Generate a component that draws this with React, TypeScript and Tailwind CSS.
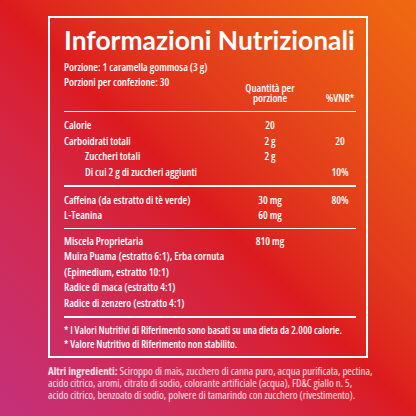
const rows1 = [
  { label: 'Calorie', amount: '20', vnr: '', indent: false },
  { label: 'Carboidrati totali', amount: '2 g', vnr: '20', indent: false },
  { label: 'Zuccheri totali', amount: '2 g', vnr: '', indent: true },
  { label: 'Di cui 2 g di zuccheri aggiunti', amount: '', vnr: '10%', indent: true },
];

const rows2 = [
  { label: 'Caffeina (da estratto di tè verde)', amount: '30 mg', vnr: '80%' },
  { label: 'L-Teanina', amount: '60 mg', vnr: '' },
];

function Row({ label, amount, vnr, indent }: { label: string; amount: string; vnr: string; indent?: boolean }) {
  return (
    <div className="flex h-[15.7px] items-center whitespace-nowrap">
      <div className={indent ? 'flex-1 pl-[21px]' : 'flex-1'}>{label}</div>
      <div className="w-[60px] text-center">{amount}</div>
      <div className="ml-[24px] w-[32px] text-center">{vnr}</div>
    </div>
  );
}

export default function App() {
  return (
    <div
      className="w-[416px] h-[416px] overflow-hidden bg-linear-to-tr from-[#c4307a] via-[#dc1a1e] to-[#f06a10] px-[48px] pt-[16px] text-white font-stretch-condensed"
      style={{ fontFamily: '"Open Sans", sans-serif' }}
    >
      <div className="border-2 border-white pl-[14px] pr-[10px] pt-[6.8px] pb-[5px] text-[10.7px] font-semibold leading-[15px]">
        <h1
          className="whitespace-nowrap text-[26.4px] font-bold font-stretch-normal leading-[30px]"
          style={{ fontFamily: 'Lato, sans-serif' }}
        >
          Informazioni Nutrizionali
        </h1>

        <div className="mt-[5px] whitespace-nowrap">Porzione: 1 caramella gommosa (3 g)</div>
        <div className="flex whitespace-nowrap">
          <div className="flex-1">Porzioni per confezione: 30</div>
          <div className="mt-[7.8px] w-[60px] text-center leading-[10.5px]">
            Quantità per
            <br />
            porzione
          </div>
          <div className="ml-[24px] mt-[17.8px] w-[32px] text-center leading-[10.5px]">%VNR*</div>
        </div>

        <div className="mt-[7.8px] h-px bg-white" />
        <div className="pt-[5.2px] pb-[5px]">
          {rows1.map((r) => (
            <Row key={r.label} {...r} />
          ))}
        </div>
        <div className="h-[2px] bg-white" />
        <div className="pt-[4.9px] pb-[4.7px]">
          {rows2.map((r) => (
            <Row key={r.label} {...r} />
          ))}
        </div>
        <div className="h-px bg-white" />
        <div className="pt-[4px] pb-[5.6px] [&>div]:h-[15.5px]">
          <div className="flex items-center whitespace-nowrap">
            <div className="flex-1">Miscela Proprietaria</div>
            <div className="w-[60px] text-center">810 mg</div>
            <div className="ml-[24px] w-[32px]" />
          </div>
          <div className="flex items-center">Muira Puama (estratto 6:1), Erba cornuta</div>
          <div className="flex items-center">(Epimedium, estratto 10:1)</div>
          <div className="flex items-center">Radice di maca (estratto 4:1)</div>
          <div className="flex items-center">Radice di zenzero (estratto 4:1)</div>
        </div>
        <div className="h-[2px] bg-white" />
        <div className="pt-[4.2px] text-[10.3px] leading-[14px] whitespace-nowrap">
          <div>* I Valori Nutritivi di Riferimento sono basati su una dieta da 2.000 calorie.</div>
          <div>* Valore Nutritivo di Riferimento non stabilito.</div>
        </div>
      </div>

      <p className="mt-[7.8px] whitespace-nowrap text-[10.9px] font-medium leading-[12px] text-white/85">
        <span className="font-bold">Altri ingredienti:</span> Sciroppo di mais, zucchero di canna puro, acqua purificata, pectina,
        <br />
        acido citrico, aromi, citrato di sodio, colorante artificiale (acqua), FD&amp;C giallo n. 5,
        <br />
        acido citrico, benzoato di sodio, polvere di tamarindo con zucchero (rivestimento).
      </p>
    </div>
  );
}
